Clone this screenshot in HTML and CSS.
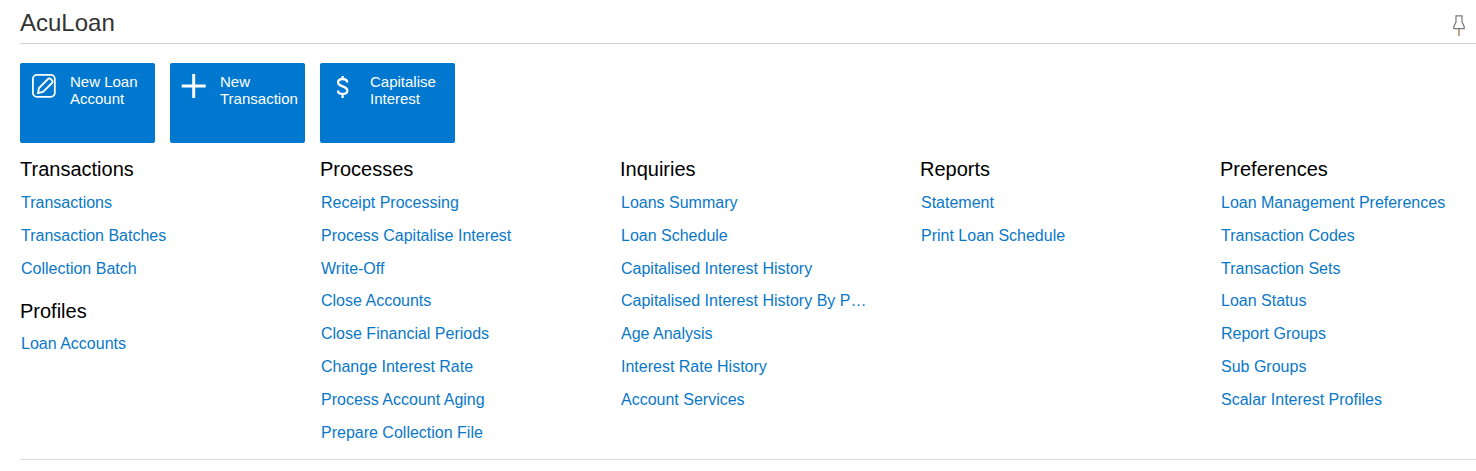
FILE: index.html
```html
<!DOCTYPE html>
<html lang="en">

<head>
    <meta charset="UTF-8">
    <title>AcuLoan</title>
    <link rel="stylesheet" href="styles.css">
</head>

<body>
    <div class="header">
        <h1 class="title">AcuLoan</h1>
        <svg class="pin" width="12" height="21" viewBox="0 0 12 21" fill="none" stroke-width="1.2">
            <path d="M6 14v7" stroke="#b5835f" stroke-width="1.5" />
            <path d="M3 .8h6v6.200l2.200 4.500v2.200H.8v-2.200L3 7z" stroke="#77787c" />
        </svg>
    </div>

    <div class="tiles">
        <a class="tile" href="#">
            <svg class="tile-icon" width="32" height="32" viewBox="0 0 32 32" fill="none" stroke="#fff">
                <rect x="4.900" y="6.900" width="21.900" height="21.900" rx="4" stroke-width="1.800" />
                <path d="M10 25l1-5 9-9a1.800 1.800 0 0 1 2.600 0l1.400 1.400a1.800 1.800 0 0 1 0 2.600l-9 9z" stroke-width="1.800" />
            </svg>
            <span>New Loan<br>Account</span>
        </a>
        <a class="tile" href="#">
            <svg class="tile-icon" width="32" height="32" viewBox="0 0 32 32" stroke="#fff" stroke-width="3">
                <path d="M3.700 18h24M15.700 6v24" />
            </svg>
            <span>New<br>Transaction</span>
        </a>
        <a class="tile" href="#">
            <svg class="tile-icon" width="32" height="32" viewBox="0 0 32 32" fill="none" stroke="#fff" stroke-width="2.300">
                <path d="M19.200 14.500c0-2.200-1.800-3.500-4.600-3.500-2.700 0-4.500 1.400-4.500 3.500 0 4.700 9.200 3 9.200 8 0 2.100-1.900 3.500-4.700 3.500-2.800 0-4.600-1.500-4.600-3.500M14.600 8v3M14.600 26v4" />
            </svg>
            <span>Capitalise<br>Interest</span>
        </a>
    </div>

    <div class="columns">
        <div class="column">
            <h2>Transactions</h2>
            <a href="#">Transactions</a>
            <a href="#">Transaction Batches</a>
            <a href="#">Collection Batch</a>
            <h2 class="next-group">Profiles</h2>
            <a href="#">Loan Accounts</a>
        </div>
        <div class="column">
            <h2>Processes</h2>
            <a href="#">Receipt Processing</a>
            <a href="#">Process Capitalise Interest</a>
            <a href="#">Write-Off</a>
            <a href="#">Close Accounts</a>
            <a href="#">Close Financial Periods</a>
            <a href="#">Change Interest Rate</a>
            <a href="#">Process Account Aging</a>
            <a href="#">Prepare Collection File</a>
        </div>
        <div class="column">
            <h2>Inquiries</h2>
            <a href="#">Loans Summary</a>
            <a href="#">Loan Schedule</a>
            <a href="#">Capitalised Interest History</a>
            <a href="#">Capitalised Interest History By P…</a>
            <a href="#">Age Analysis</a>
            <a href="#">Interest Rate History</a>
            <a href="#">Account Services</a>
        </div>
        <div class="column">
            <h2>Reports</h2>
            <a href="#">Statement</a>
            <a href="#">Print Loan Schedule</a>
        </div>
        <div class="column">
            <h2>Preferences</h2>
            <a href="#">Loan Management Preferences</a>
            <a href="#">Transaction Codes</a>
            <a href="#">Transaction Sets</a>
            <a href="#">Loan Status</a>
            <a href="#">Report Groups</a>
            <a href="#">Sub Groups</a>
            <a href="#">Scalar Interest Profiles</a>
        </div>
    </div>
</body>

</html>
```

FILE: styles.css
```css
body {
    margin: 0;
    padding: 0 0 0 20px;
    font-family: "Liberation Sans", Arial, sans-serif;
    background: #fff;
    overflow: hidden;
}

.header {
    display: flex;
    justify-content: space-between;
    align-items: flex-end;
    height: 43px;
    border-bottom: 1px solid #d2d2d2;
}

.title {
    margin: 0 0 6px 0;
    font-size: 24px;
    line-height: 28px;
    font-weight: normal;
    color: #333;
}

.pin {
    margin-bottom: 7px;
    margin-right: 11px;
}

.tiles {
    display: flex;
    gap: 15px;
    margin-top: 19px;
}

.tile {
    display: flex;
    box-sizing: border-box;
    width: 135px;
    height: 80px;
    padding: 10px 0 0 8px;
    background: #0078cf;
    border-radius: 2px;
    color: #fff;
    font-size: 15px;
    line-height: 17px;
    text-decoration: none;
}

.tile-icon {
    flex: none;
    margin-right: 10px;
    margin-top: -5px;
}

.columns {
    display: grid;
    grid-template-columns: repeat(5, 300px);
    width: 1456px;
    height: 302px;
    margin-top: 14px;
    border-bottom: 1px solid #dcdcdc;
}

.column {
    display: flex;
    flex-direction: column;
    align-items: flex-start;
}

.column h2 {
    margin: 0 0 6px 0;
    font-size: 20px;
    line-height: 24px;
    font-weight: normal;
    color: #000;
}

.column h2.next-group {
    margin-top: 14px;
    margin-bottom: 5px;
}

.column a {
    padding-left: 1px;
    font-size: 16px;
    line-height: 32.8px;
    color: #0a78c8;
    text-decoration: none;
    white-space: nowrap;
}
```
